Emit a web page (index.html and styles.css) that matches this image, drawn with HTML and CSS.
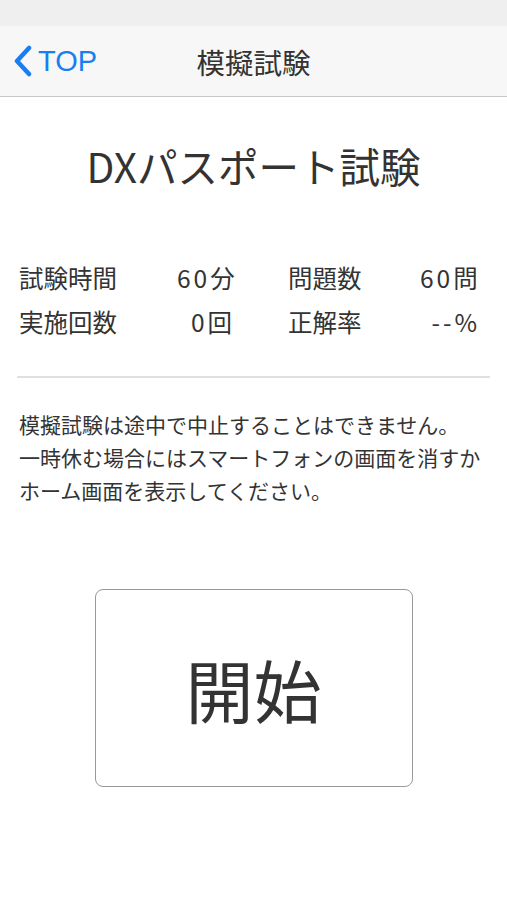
FILE: index.html
```html
<!DOCTYPE html>
<html lang="ja">
<head>
    <meta charset="UTF-8">
    <meta name="viewport" content="width=device-width, initial-scale=1.0">
    <title>模擬試験</title>
    <link rel="stylesheet" href="styles.css">
</head>
<body>
    <div class="status-bar"></div>
    <header class="nav-bar">
        <a class="back" href="#">
            <svg class="chevron" width="20" height="32" viewBox="0 0 20 32">
                <path d="M16 3 L4 16 L16 29" fill="none" stroke="currentColor" stroke-width="4.5" stroke-linecap="round" stroke-linejoin="round"/>
            </svg>
            <span>TOP</span>
        </a>
        <h1 class="nav-title">模擬試験</h1>
    </header>
    <main class="content">
        <h2 class="exam-title">DXパスポート試験</h2>
        <div class="stats">
            <span class="label">試験時間</span><span class="value">60分</span>
            <span class="label">問題数</span><span class="value">60問</span>
            <span class="label">実施回数</span><span class="value">0回</span>
            <span class="label">正解率</span><span class="value">--%</span>
        </div>
        <hr class="divider">
        <p class="notice">模擬試験は途中で中止することはできません。<br>一時休む場合にはスマートフォンの画面を消すか<br>ホーム画面を表示してください。</p>
        <div class="start-wrap">
            <button class="start-button">開始</button>
        </div>
    </main>
</body>
</html>
```

FILE: styles.css
```css
body {
    margin: 0;
    font-family: "Noto Sans CJK JP", "Noto Sans", sans-serif;
    color: #333;
    background-color: #fff;
}
.status-bar {
    height: 26px;
    background-color: #efefef;
}
.nav-bar {
    position: relative;
    height: 70px;
    background-color: #f7f7f7;
    border-bottom: 1px solid #c8c8c8;
    display: flex;
    align-items: center;
    justify-content: center;
}
.back {
    position: absolute;
    left: 13px;
    top: 0;
    bottom: 0;
    display: flex;
    align-items: center;
    gap: 5px;
    color: #1a7ef3;
    text-decoration: none;
    font-family: "Liberation Sans", sans-serif;
    font-size: 29px;
}
.nav-title {
    margin: 0;
    font-size: 28.5px;
    font-weight: normal;
    color: #333;
}
.content {
    padding: 0 17px;
}
.exam-title {
    margin: 41px 0 0;
    text-align: center;
    font-size: 40.5px;
    font-weight: normal;
    line-height: 56px;
}
.stats {
    margin: 62px 0 0;
    display: grid;
    grid-template-columns: 158px 58px 1fr 60px;
    padding: 0 10px 0 2px;
    font-size: 24.5px;
    line-height: 44px;
}
.stats .label:nth-child(3),
.stats .label:nth-child(7) {
    padding-left: 53px;
}
.value {
    text-align: right;
    letter-spacing: 3px;
    white-space: nowrap;
}
.divider {
    margin: 32px 0 0;
    border: 0;
    border-top: 2px solid #e0e0e0;
}
.notice {
    margin: 30px 0 0 2px;
    font-size: 21px;
    line-height: 33px;
    white-space: nowrap;
}
.start-wrap {
    display: flex;
    justify-content: center;
    margin-top: 82px;
}
.start-button {
    width: 318px;
    height: 198px;
    background-color: #fff;
    border: 1.5px solid #999;
    border-radius: 8px;
    font-family: inherit;
    font-size: 68px;
    color: #333;
    cursor: pointer;
}
```
